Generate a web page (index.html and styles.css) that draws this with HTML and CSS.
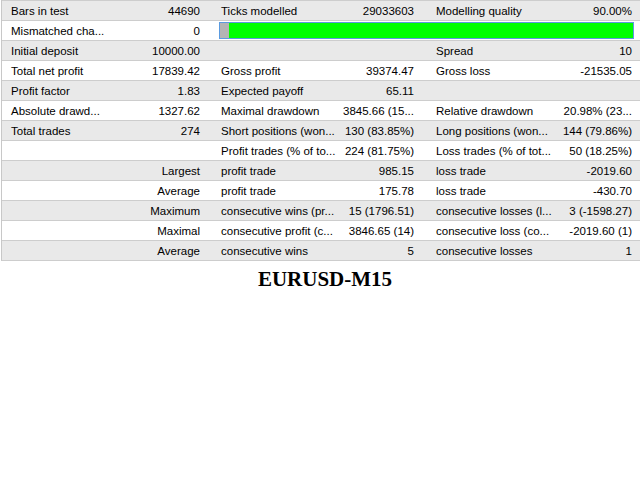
FILE: index.html
```html
<!DOCTYPE html>
<html>
<head>
<meta charset="utf-8">
<link rel="stylesheet" href="styles.css">
</head>
<body>
<div class="report">
  <div class="row gray">
    <div class="cell c1"><span>Bars in test</span><span>44690</span></div>
    <div class="cell c2"><span>Ticks modelled</span><span>29033603</span></div>
    <div class="cell c3"><span>Modelling quality</span><span>90.00%</span></div>
  </div>
  <div class="row white">
    <div class="cell c1"><span>Mismatched cha...</span><span>0</span></div>
    <div class="barcell">
      <div class="bar"><div class="bar-gray"></div><div class="bar-green"></div></div>
    </div>
  </div>
  <div class="row gray">
    <div class="cell c1"><span>Initial deposit</span><span>10000.00</span></div>
    <div class="cell c2"><span></span><span></span></div>
    <div class="cell c3"><span>Spread</span><span>10</span></div>
  </div>
  <div class="row white">
    <div class="cell c1"><span>Total net profit</span><span>17839.42</span></div>
    <div class="cell c2"><span>Gross profit</span><span>39374.47</span></div>
    <div class="cell c3"><span>Gross loss</span><span>-21535.05</span></div>
  </div>
  <div class="row gray">
    <div class="cell c1"><span>Profit factor</span><span>1.83</span></div>
    <div class="cell c2"><span>Expected payoff</span><span>65.11</span></div>
    <div class="cell c3"><span></span><span></span></div>
  </div>
  <div class="row white">
    <div class="cell c1"><span>Absolute drawd...</span><span>1327.62</span></div>
    <div class="cell c2"><span>Maximal drawdown</span><span>3845.66 (15...</span></div>
    <div class="cell c3"><span>Relative drawdown</span><span>20.98% (23...</span></div>
  </div>
  <div class="row gray">
    <div class="cell c1"><span>Total trades</span><span>274</span></div>
    <div class="cell c2"><span>Short positions (won...</span><span>130 (83.85%)</span></div>
    <div class="cell c3"><span>Long positions (won...</span><span>144 (79.86%)</span></div>
  </div>
  <div class="row white">
    <div class="cell c1"><span></span><span></span></div>
    <div class="cell c2"><span>Profit trades (% of to...</span><span>224 (81.75%)</span></div>
    <div class="cell c3"><span>Loss trades (% of tot...</span><span>50 (18.25%)</span></div>
  </div>
  <div class="row gray">
    <div class="cell c1"><span></span><span>Largest</span></div>
    <div class="cell c2"><span>profit trade</span><span>985.15</span></div>
    <div class="cell c3"><span>loss trade</span><span>-2019.60</span></div>
  </div>
  <div class="row white">
    <div class="cell c1"><span></span><span>Average</span></div>
    <div class="cell c2"><span>profit trade</span><span>175.78</span></div>
    <div class="cell c3"><span>loss trade</span><span>-430.70</span></div>
  </div>
  <div class="row gray">
    <div class="cell c1"><span></span><span>Maximum</span></div>
    <div class="cell c2"><span>consecutive wins (pr...</span><span>15 (1796.51)</span></div>
    <div class="cell c3"><span>consecutive losses (l...</span><span>3 (-1598.27)</span></div>
  </div>
  <div class="row white">
    <div class="cell c1"><span></span><span>Maximal</span></div>
    <div class="cell c2"><span>consecutive profit (c...</span><span>3846.65 (14)</span></div>
    <div class="cell c3"><span>consecutive loss (co...</span><span>-2019.60 (1)</span></div>
  </div>
  <div class="row gray">
    <div class="cell c1"><span></span><span>Average</span></div>
    <div class="cell c2"><span>consecutive wins</span><span>5</span></div>
    <div class="cell c3"><span>consecutive losses</span><span>1</span></div>
  </div>
</div>
<div class="title">EURUSD-M15</div>
</body>
</html>
```
FILE: styles.css
```css
html, body {
  margin: 0;
  padding: 0;
  background: #ffffff;
}
body {
  width: 640px;
  height: 480px;
  overflow: hidden;
}
.report {
  margin-left: 1px;
  border-left: 1px solid #c8c8c8;
  border-bottom: 1px solid #cdcdcd;
  font-family: "Liberation Sans", Arial, sans-serif;
  font-size: 11.5px;
  color: #000;
}
.row {
  display: grid;
  grid-template-columns: 208px 215px 215px;
  height: 19px;
  border-top: 1px solid #cdcdcd;
}
.row.gray {
  background: #e9e9e9;
}
.row.white {
  background: #ffffff;
}
.cell {
  display: flex;
  justify-content: space-between;
  align-items: flex-start;
  padding-top: 3px;
  line-height: 15px;
  white-space: nowrap;
  overflow: hidden;
}
.c1 {
  padding-left: 9px;
  padding-right: 10px;
}
.c2 {
  padding-left: 11px;
  padding-right: 11px;
}
.c3 {
  padding-left: 11px;
  padding-right: 8px;
}
.barcell {
  grid-column: 2 / 4;
  padding: 1px 6px 1px 9px;
}
.bar {
  display: flex;
  height: 15px;
  border: 1px solid #5b9be0;
}
.bar-gray {
  width: 9px;
  background: #b4b4b4;
}
.bar-green {
  flex: 1;
  background: #00ff00;
}
.title {
  text-align: center;
  font-family: "Liberation Serif", "Times New Roman", serif;
  font-weight: bold;
  font-size: 21px;
  line-height: 24px;
  padding-top: 6px;
  padding-left: 10px;
  color: #000;
}
```
